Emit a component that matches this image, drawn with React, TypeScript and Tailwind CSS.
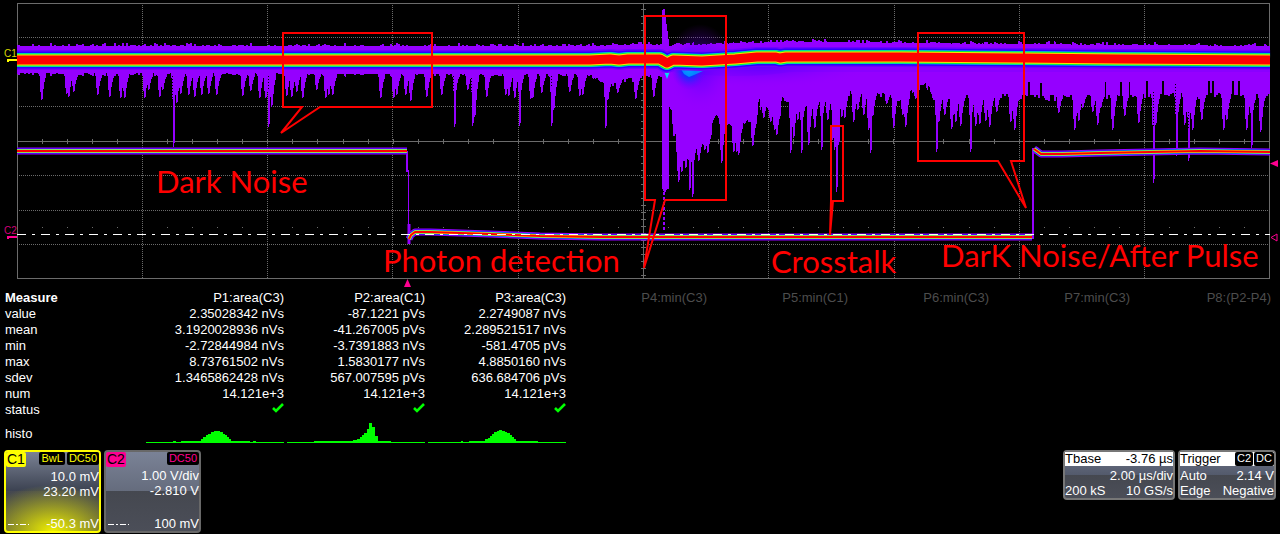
type Point = [number, number];

const RED = "#ff0000";
const PURPLE = "#9500ff";
const GREY = "#6b6b6b";
const LEFT = 17;
const RIGHT = 1270;

// Repeatable pseudo-random value in 0..1 for a column
const noise = (n: number) => {
  const v = Math.sin(n * 12.9898 + 4.1) * 43758.5453;
  return v - Math.floor(v);
};

const lerp = (pts: Point[], x: number) => {
  for (let i = 1; i < pts.length; i++) {
    const [x0, y0] = pts[i - 1];
    const [x1, y1] = pts[i];
    if (x <= x1) return y0 + ((y1 - y0) * (x - x0)) / (x1 - x0);
  }
  return pts[pts.length - 1][1];
};

const floorPts: Point[] = [
  [17, 73], [590, 74], [600, 80], [620, 80], [645, 75], [661, 75], [662, 188], [667, 188], [668, 106],
  [671, 110], [673, 134], [675, 130], [676, 146], [695, 143], [710, 128], [716, 112], [725, 124], [750, 120],
  [758, 114], [762, 100], [775, 114], [781, 96], [800, 102], [830, 95], [848, 90], [880, 92], [900, 95],
  [926, 82], [934, 95], [1010, 94], [1060, 95], [1110, 94], [1150, 93], [1215, 93], [1270, 94],
];

const roofPts: Point[] = [
  [17, 46], [600, 46], [640, 44], [661, 45], [662, 10], [664, 9], [666, 24], [669, 46], [700, 45], [740, 43],
  [800, 42], [900, 43], [1000, 44], [1270, 46],
];

const spikes: Point[] = [
  [41, 100], [66, 94], [68, 97], [73, 92], [97, 95], [109, 97], [120, 98], [124, 98], [144, 98], [148, 90],
  [159, 97], [162, 90], [173, 147], [176, 103], [180, 94], [188, 95], [194, 97], [201, 95], [208, 94],
  [216, 95], [242, 96], [250, 91], [259, 98], [265, 98], [268, 127], [271, 107], [286, 96], [291, 97],
  [296, 92], [302, 98], [316, 90], [325, 98], [328, 95], [332, 95], [380, 98], [393, 98], [396, 95],
  [405, 95], [410, 101], [426, 97], [441, 95], [454, 127], [467, 90], [472, 126], [474, 117], [486, 97],
  [505, 95], [508, 96], [514, 98], [519, 126], [530, 99], [532, 98], [541, 93], [551, 126], [553, 110],
  [569, 92], [579, 96], [582, 95], [605, 128], [607, 100], [617, 93], [635, 99], [653, 97], [664, 192],
  [678, 182], [681, 172], [685, 168], [689, 190], [692, 197], [698, 161], [704, 150], [707, 153], [721, 163],
  [733, 152], [736, 152], [738, 155], [752, 146], [763, 118], [770, 122], [774, 130], [776, 135], [790, 153],
  [793, 138], [797, 120], [801, 153], [808, 145], [814, 128], [821, 150], [827, 120], [832, 140], [834, 150],
  [836, 192], [838, 145], [841, 117], [844, 118], [853, 122], [857, 110], [863, 115], [868, 130], [870, 153],
  [872, 116], [886, 104], [893, 128], [902, 115], [905, 127], [915, 99], [933, 100], [936, 152], [938, 122],
  [944, 115], [951, 129], [955, 122], [960, 126], [970, 152], [975, 126], [979, 124], [985, 121], [989, 127],
  [996, 112], [1010, 122], [1014, 130], [1045, 100], [1058, 113], [1074, 130], [1078, 121], [1082, 108],
  [1092, 112], [1097, 125], [1100, 108], [1112, 130], [1124, 116], [1138, 123], [1153, 183], [1155, 125],
  [1176, 156], [1184, 125], [1188, 161], [1192, 130], [1201, 120], [1223, 130], [1226, 120], [1246, 130],
  [1251, 148], [1260, 132],
];

const buildEnvelope = () => {
  const bottoms: number[] = [];
  for (let x = LEFT; x < RIGHT; x++) {
    const calm = x < 596 || (x > 636 && x < 662);
    const n = noise(x >> 1);
    // Busy stretches get the occasional gap cut up into the floor
    const gap = !calm && x > 756 && n < 0.14 ? -12 : 0;
    bottoms.push(lerp(floorPts, x) + n * n * (calm ? 3 : 6) + gap);
  }
  for (const [sx, sy] of spikes) {
    const base = lerp(floorPts, sx);
    const depth = sy - base;
    const shape: Point[] = [[-2, 0.12], [-1, 0.7], [0, 1], [1, 0.95], [2, 0.6], [3, 0.35], [4, 0.2]];
    for (const [dx, k] of shape) {
      const i = sx + dx - LEFT;
      const share = depth > 45 && dx !== 0 && dx !== 1 ? k * 0.5 : k;
      if (i >= 0 && i < bottoms.length) bottoms[i] = Math.max(bottoms[i], base + depth * share);
    }
  }
  let d = "";
  for (let x = LEFT; x < RIGHT; x++) {
    const top = Math.round(lerp(roofPts, x) - Math.pow(noise(x >> 1), 3) * 3);
    d += `M${x} ${top}h1V${Math.round(bottoms[x - LEFT])}h-1z`;
  }
  return d;
};

const envelope = buildEnvelope();

const core =
  "M17 60H590L610 59L619 60L628 59L660 59L667 63L673 60L702 61L735 59L757 57L776 57L780 58L786 57H900L1020 58L1120 59L1270 60";
const high = "M17 151H407";
const low = "M409 239L411 235L415 232H430L490 234L540 236L600 237H1032";
const after = "M1034 149L1037 151L1041 154H1062L1100 153L1150 152L1200 151L1270 152";

const range = (from: number, to: number, step: number) => {
  const out: number[] = [];
  for (let v = from; v <= to; v += step) out.push(v);
  return out;
};

const callouts = [
  "M283 33H432V107H320L281 133L302 107H283Z",
  "M645 16H726V200H665L644 268L655 200H645Z",
  "M831 126H843V201H833L830 235L831 201Z",
  "M918 33H1024V161H1011L1026 208L998 161H918Z",
];

const notes = [
  { x: 156, y: 193, text: "Dark Noise" },
  { x: 383, y: 272, text: "Photon detection" },
  { x: 771, y: 273, text: "Crosstalk" },
  { x: 941, y: 267, text: "DarK Noise/After Pulse" },
];

function Trace({ d }: { d: string }) {
  return (
    <g fill="none" strokeLinejoin="round">
      <path d={d} stroke={PURPLE} strokeWidth="7" />
      <path d={d} stroke="#2200ff" strokeWidth="5" />
      <path d={d} stroke="#00e8c0" strokeWidth="4" />
      <path d={d} stroke="#ffe000" strokeWidth="3" />
      <path d={d} stroke={RED} strokeWidth="2" />
    </g>
  );
}

function Scope() {
  return (
    <svg viewBox="0 0 1280 290" className="block h-auto w-full" role="img" aria-label="Oscilloscope traces">
      <defs>
        <radialGradient id="glow">
          <stop offset="0" stopColor="#00a0ff" />
          <stop offset="0.4" stopColor="#1030ff" />
          <stop offset="1" stopColor="#7000ff" stopOpacity="0" />
        </radialGradient>
        <radialGradient id="bloom">
          <stop offset="0" stopColor="#3000ff" />
          <stop offset="1" stopColor="#9500ff" stopOpacity="0" />
        </radialGradient>
      </defs>

      <g stroke={GREY} fill="none" shapeRendering="crispEdges">
        <rect x="17.5" y="3.5" width="1252" height="275" />
        <path d="M643.5 3V278M17 141.5H1270" />
        <g strokeDasharray="1 1">
          {[142, 267, 392, 518, 768, 894, 1019, 1144].map((x) => (
            <path key={x} d={`M${x}.5 5V278`} />
          ))}
          {[37, 106, 175, 210, 244].map((y) => (
            <path key={y} d={`M19 ${y}.5H1269`} />
          ))}
        </g>
        {range(1, 49, 1).map((i) => {
          const x = Math.round(17 + i * 25.04);
          return <path key={i} d={`M${x}.5 139V144M${x}.5 227V228`} />;
        })}
        {range(9, 275, 7).map((y) => (
          <path key={y} d={`M641 ${y}.5H646`} />
        ))}
      </g>

      <path d={envelope} fill={PURPLE} shapeRendering="crispEdges" />
      <path d="M664 192V230" stroke={PURPLE} strokeWidth="2" strokeDasharray="3 2" />
      <path
        d="M172.500 76V110M268.500 76V90M453.500 76V96M471.500 78V92M551.500 76V88M1153.500 92V126M1175.500 84V120M1188.500 112V130"
        stroke="#000000"
        strokeDasharray="1 2"
      />
      <path d="M672 60H1270V72H790Q740 80 672 72Z" fill="#6a00ff" opacity="0.25" />
      <ellipse cx="700" cy="68" rx="34" ry="44" fill="url(#bloom)" opacity="0.6" />
      <ellipse cx="760" cy="64" rx="120" ry="24" fill="url(#bloom)" opacity="0.6" />
      <ellipse cx="689" cy="68" rx="18" ry="22" fill="url(#glow)" />
      <path d="M679 66L684 74L689 77L694 75L703 71L712 66Z" fill="#00a8ff" opacity="0.7" />
      <path d="M662 66L667 79L672 66Z" fill="#00d8ff" />
      <path d="M663 66L667 74L671 66Z" fill="#a0ff00" />

      <g fill="none" strokeLinejoin="round">
        <path d={core} stroke="#7000ff" strokeWidth="20" />
        <path d={core} stroke="#2b00ff" strokeWidth="17" />
        <path d={core} stroke="#00c8ff" strokeWidth="14" />
        <path d={core} stroke="#00f040" strokeWidth="13" />
        <path d={core} stroke="#ffe000" strokeWidth="11" />
        <path d={core} stroke={RED} strokeWidth="9" />
      </g>

      <path d="M407 151V172" stroke={PURPLE} strokeWidth="2" />
      <path d="M408.500 170V225" stroke={PURPLE} />
      <path d="M409 224V244" stroke={PURPLE} strokeWidth="3" />
      <path d="M1033 148V239" stroke={PURPLE} strokeWidth="2" />
      <Trace d={high} />
      <Trace d={low} />
      <Trace d={after} />

      <path
        d="M17 234.500H1270"
        stroke="#ffffff"
        strokeDasharray="9 6 3 6"
        shapeRendering="crispEdges"
      />

      <g fill="none" stroke={RED} strokeWidth="2">
        {callouts.map((d) => (
          <path key={d} d={d} />
        ))}
      </g>
      <g fill={RED} className="font-['Lato',sans-serif] text-[31px]">
        {notes.map((n) => (
          <text key={n.text} x={n.x} y={n.y}>
            {n.text}
          </text>
        ))}
      </g>

      <g className="font-['Liberation_Sans',sans-serif] text-[10px]">
        <text x="4" y="57" fill="#d8d800">C1</text>
        <text x="4" y="234" fill="#d00078">C2</text>
      </g>
      <path d="M7 59H17V61H9V62H7Z" fill="#ffff00" />
      <path d="M7 236H17V238H9V239H7Z" fill="#ff0090" />
      <path d="M407.500 279L411 287H404Z" fill="#ff0090" />
      <path d="M1270 163.500L1278 160V167Z" fill="#ff0090" />
      <path d="M1271 237.500L1277 234V241Z" fill="none" stroke="#ff0090" />
    </svg>
  );
}

const headers = [
  "P1:area(C3)", "P2:area(C1)", "P3:area(C3)", "P4:min(C3)", "P5:min(C1)", "P6:min(C3)", "P7:min(C3)", "P8:(P2-P4)",
];

const rows: [string, string[]][] = [
  ["value", ["2.35028342 nVs", "-87.1221 pVs", "2.2749087 nVs"]],
  ["mean", ["3.1920028936 nVs", "-41.267005 pVs", "2.289521517 nVs"]],
  ["min", ["-2.72844984 nVs", "-3.7391883 nVs", "-581.4705 pVs"]],
  ["max", ["8.73761502 nVs", "1.5830177 nVs", "4.8850160 nVs"]],
  ["sdev", ["1.3465862428 nVs", "567.007595 pVs", "636.684706 pVs"]],
  ["num", ["14.121e+3", "14.121e+3", "14.121e+3"]],
];

const histograms = [
  "M0 24V23H27V22H30V23H35V22H55V20H57V18H60V16H62V15H65V13H68V12H74V13H77V15H79V16H81V18H83V20H85V22H104V23H107V22H110V23H138V24Z",
  "M0 24V23H27V22H66V21H70V20H73V18H75V16H77V14H80V10H82V4H85V8H88V17H91V22H104V23H138V24Z",
  "M0 24V23H33V22H35V23H41V22H57V20H60V19H62V17H64V15H66V13H69V12H71V11H74V12H77V13H79V14H82V16H84V18H86V20H88V22H110V23H138V24Z",
];

function Measurements() {
  return (
    <table className="w-full table-fixed text-[13px] leading-4">
      <thead>
        <tr>
          <th scope="col" className="w-[138px] p-0 text-left font-bold">Measure</th>
          {headers.map((h, i) => (
            <th
              key={h}
              scope="col"
              className={i < 3 ? "p-0 text-right font-normal" : "p-0 text-right font-normal text-[#4d4d4d]"}
            >
              {h}
            </th>
          ))}
        </tr>
      </thead>
      <tbody>
        {rows.map(([name, values]) => (
          <tr key={name}>
            <th scope="row" className="p-0 text-left font-normal">{name}</th>
            {values.map((v, i) => (
              <td key={i} className="p-0 text-right">{v}</td>
            ))}
          </tr>
        ))}
        <tr>
          <th scope="row" className="p-0 text-left font-normal">status</th>
          {histograms.map((_, i) => (
            <td key={i} className="p-0 align-top">
              <svg viewBox="0 0 12 10" className="mt-px ml-auto block h-[10px] w-3" role="img" aria-label="OK">
                <path d="M1 5L4 8L11 1" fill="none" stroke="#00ff00" strokeWidth="2.600" />
              </svg>
            </td>
          ))}
        </tr>
        <tr>
          <th scope="row" className="h-8 p-0 text-left font-normal">histo</th>
          {histograms.map((d, i) => (
            <td key={i} className="p-0 pt-px pl-[3px] align-top">
              <svg viewBox="0 0 138 24" preserveAspectRatio="none" className="block h-6 w-full" aria-hidden="true">
                <path d={d} fill="#00ff00" shapeRendering="crispEdges" />
              </svg>
            </td>
          ))}
        </tr>
      </tbody>
    </table>
  );
}

const chip = "rounded-xs bg-black px-[2px] text-[11px] leading-[13px]";

function DashDot() {
  return (
    <svg viewBox="0 0 21 2" className="h-[2px] w-[21px]" aria-hidden="true">
      <path d="M0 1H21" stroke="#ffffff" strokeDasharray="6 2 2 2" shapeRendering="crispEdges" />
    </svg>
  );
}

export default function App() {
  return (
    <main className="min-h-screen bg-black font-['Liberation_Sans',Arial,sans-serif] text-white">
      <Scope />
      <div className="pr-[9px] pl-[5px]">
        <Measurements />
      </div>
      <footer className="flex items-start gap-[3px] px-1 text-[13px] leading-[15px]">
        <section
          aria-label="Channel 1"
          className="flex h-[83px] w-[97px] flex-col rounded-[4px] border-2 border-[#ffff00] bg-[radial-gradient(ellipse_76px_46px_at_50%_100%,#f0f000,transparent),linear-gradient(#7a8294,#3b4150_50%,#454850_50%,#3c3e45)] text-right"
        >
          <div className="mb-[2px] flex items-start gap-[2px] text-[#ffff00]">
            <h2 className="mr-auto rounded-xs bg-[#ffff00] px-px text-sm leading-[15px] text-black">C1</h2>
            <span className={chip}>BwL</span>
            <span className={chip}>DC50</span>
          </div>
          <p>10.0 mV</p>
          <p>23.20 mV</p>
          <p className="mt-auto flex items-center justify-between pl-[2px]">
            <DashDot />
            -50.3 mV
          </p>
        </section>
        <section
          aria-label="Channel 2"
          className="flex h-[83px] w-[97px] flex-col rounded-[4px] border-2 border-[#686868] bg-[linear-gradient(#7a8296,#656c7d_50%,#454850_50%,#4b4e58)] text-right"
        >
          <div className="mb-px flex items-start text-[#ff0090]">
            <h2 className="mr-auto rounded-xs bg-[#ff0090] px-px text-sm leading-[15px] text-black">C2</h2>
            <span className={chip}>DC50</span>
          </div>
          <p>1.00 V/div</p>
          <p>-2.810 V</p>
          <p className="mt-auto flex items-center justify-between pl-[2px]">
            <DashDot />
            100 mV
          </p>
        </section>
        <section
          aria-label="Timebase"
          className="ml-auto w-[112px] rounded-[4px] border-2 border-[#777777] bg-[linear-gradient(#6c7386,#535a6c_50%,#454850_50%,#4b4e58)]"
        >
          <h2 className="mb-[2px] flex justify-between bg-white leading-[14px] text-black">
            <span>Tbase</span>
            <span>-3.76 µs</span>
          </h2>
          <p className="text-right">2.00 µs/div</p>
          <p className="flex justify-between">
            <span>200 kS</span>
            <span>10 GS/s</span>
          </p>
        </section>
        <section
          aria-label="Trigger"
          className="w-[98px] rounded-[4px] border-2 border-[#777777] bg-[linear-gradient(#6c7386,#535a6c_50%,#454850_50%,#4b4e58)]"
        >
          <h2 className="mb-[2px] flex gap-px bg-white leading-[14px] text-black">
            <span className="mr-auto">Trigger</span>
            <span className="rounded-xs bg-black px-[2px] text-[11px] leading-[13px] text-white">C2</span>
            <span className="rounded-xs bg-black px-[2px] text-[11px] leading-[13px] text-white">DC</span>
          </h2>
          <p className="flex justify-between">
            <span>Auto</span>
            <span>2.14 V</span>
          </p>
          <p className="flex justify-between">
            <span>Edge</span>
            <span>Negative</span>
          </p>
        </section>
      </footer>
    </main>
  );
}
